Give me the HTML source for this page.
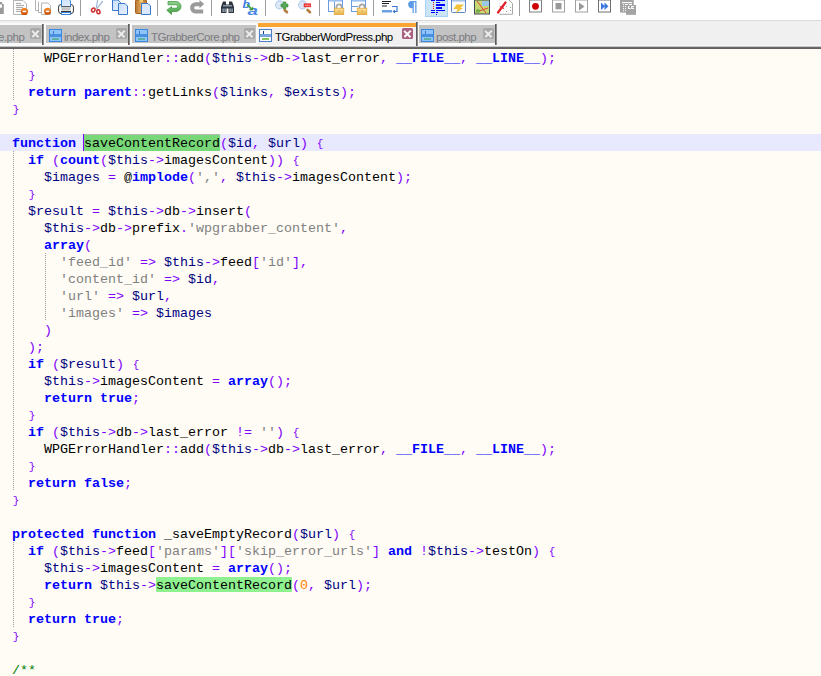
<!DOCTYPE html>
<html><head><meta charset="utf-8">
<style>
*{margin:0;padding:0;box-sizing:border-box}
html,body{width:821px;height:676px;overflow:hidden;background:#FEFCF5}
body{position:relative;font-family:"Liberation Sans",sans-serif}
#tb{position:absolute;left:0;top:0;width:821px;height:20px;background:#fff}
#tbl{position:absolute;left:0;top:20px;width:821px;height:1px;background:#dadada}
#tabbar{position:absolute;left:0;top:21px;width:821px;height:24px;background:#f0f0f0}
#tabw{position:absolute;left:0;top:45px;width:821px;height:1px;background:#fafafa}
#tabd1{position:absolute;left:0;top:46px;width:821px;height:1px;background:#c4c4c4}
#tabd2{position:absolute;left:0;top:47px;width:821px;height:2px;background:linear-gradient(#6e6e6e,#5a5a5a)}
.tabo{position:absolute;top:23px;height:22px;background:#fafafa}
.fl{position:absolute;top:29px;width:13px;height:13px;border:1px solid #3a88e0;background:#8ec4fa}
.fl i{position:absolute;left:3px;top:1px;width:1px;height:3px;background:#3a78d0}
.fl b{position:absolute;left:0;top:4px;width:11px;height:2.5px;background:#4a90e0}
.fl u{position:absolute;left:2px;top:8px;width:7px;height:1.5px;background:#5eb0a0}
.fa{background:#fdfdfd;border-color:#4a7ec8}
.fa b{background:#7aa6dc}
.fa u{background:#88c860}
.fa i{background:#1a3a90}
.x{position:absolute;top:28px;width:11px;height:11px;background:#a9a9a9;border-radius:1.5px}
.x:before,.x:after{content:"";position:absolute;left:1.2px;top:4.7px;width:8.6px;height:1.6px;background:#ececec;transform:rotate(45deg)}
.x:after{transform:rotate(-45deg)}
.xa{background:#a8617f}
.xa:before,.xa:after{background:#fff}
.tab{position:absolute;top:25px;height:18px;background:#c3c3c3}
.tabsep{position:absolute;top:24px;width:2px;height:21px;background:linear-gradient(90deg,#5c5c5c 50%,#8c8c8c 50%)}
.tt{position:absolute;top:30px;font-size:11.5px;line-height:14px;color:#7a7a80;white-space:nowrap;letter-spacing:-0.5px}
#ed{position:absolute;left:0;top:49px;width:821px;height:627px;background:#FEFCF5}
#cur{position:absolute;left:0;top:134px;width:821px;height:17px;background:#E8E8FF}
.l{position:absolute;left:12px;height:17px;line-height:17px;white-space:pre;font-family:"Liberation Mono",monospace;font-size:13.333px;color:#000}
.l b,.l i{font-style:normal;font-weight:normal}
.k{color:#0000FF;font-weight:bold!important}
.v{color:#000080}
.o{color:#8000FF}
.br{display:inline-block;width:8px;text-align:center;font-size:11px;vertical-align:0;line-height:17px}
.s{color:#808080}
.n{color:#FF8000}
.c{color:#008000}
.g{position:absolute;width:1px;background-image:linear-gradient(#a0a0a0 50%,transparent 50%);background-size:1px 2px}
.hl{position:absolute;height:17px;background:#8ff08f;border-radius:1px}
</style></head><body>
<div id="tb"></div><div id="tbl"></div>
<div id="tabbar"></div><div id="tabw"></div><div id="tabd1"></div><div id="tabd2"></div>
<!-- tab1 partial -->
<div class="tabo" style="left:0;width:44px"></div><div class="tab" style="left:0;width:42px"></div>
<div class="tt" style="left:-2px">e.php</div>
<div class="x" style="left:30px"></div>
<div class="tabsep" style="left:42px"></div>
<!-- tab2 -->
<div class="tabo" style="left:44px;width:86px"></div><div class="tab" style="left:46px;width:82px"></div>
<div class="fl" style="left:49px"><i></i><b></b><u></u></div>
<div class="tt" style="left:64px">index.php</div>
<div class="x" style="left:116px"></div>
<div class="tabsep" style="left:128px"></div>
<!-- tab3 -->
<div class="tabo" style="left:130px;width:128px"></div><div class="tab" style="left:132px;width:124px"></div>
<div class="fl" style="left:135px"><i></i><b></b><u></u></div>
<div class="tt" style="left:151px">TGrabberCore.php</div>
<div class="x" style="left:244px"></div>
<!-- active tab4 -->
<div style="position:absolute;left:258px;top:23px;width:158px;height:4px;background:#faa432"></div>
<div style="position:absolute;left:258px;top:27px;width:158px;height:1px;background:#fafafa"></div>
<div class="fl fa" style="left:259px"><i></i><b></b><u></u></div>
<div class="tt" style="left:275px;color:#000">TGrabberWordPress.php</div>
<div class="x xa" style="left:402px"></div>
<div class="tabsep" style="left:416px;top:22px;height:24px"></div>
<!-- tab5 -->
<div class="tabo" style="left:418px;width:78px"></div><div class="tab" style="left:419px;width:77px"></div>
<div class="fl" style="left:421px"><i></i><b></b><u></u></div>
<div class="tt" style="left:436px">post.php</div>
<div class="x" style="left:483px"></div>
<div class="tabsep" style="left:495px"></div>

<svg width="821" height="20" viewBox="0 0 821 20" style="position:absolute;left:0;top:0">
<defs>
<linearGradient id="og" x1="0" y1="0" x2="0" y2="1"><stop offset="0" stop-color="#f7902e"/><stop offset="1" stop-color="#c94a00"/></linearGradient>
<linearGradient id="pg" x1="0" y1="0" x2="0" y2="1"><stop offset="0" stop-color="#f4f4f4"/><stop offset="0.5" stop-color="#c8c8c8"/><stop offset="1" stop-color="#9c9c9c"/></linearGradient>
<linearGradient id="bp" x1="0" y1="0" x2="1" y2="1"><stop offset="0" stop-color="#c9defa"/><stop offset="1" stop-color="#e9f1fd"/></linearGradient>
<linearGradient id="gr" x1="0" y1="0" x2="0" y2="1"><stop offset="0" stop-color="#8fd38f"/><stop offset="1" stop-color="#3f9f3f"/></linearGradient>
<linearGradient id="gold" x1="0" y1="0" x2="0" y2="1"><stop offset="0" stop-color="#fbe6a0"/><stop offset="1" stop-color="#e6b044"/></linearGradient>
<linearGradient id="brn" x1="0" y1="0" x2="1" y2="0"><stop offset="0" stop-color="#b87830"/><stop offset="0.5" stop-color="#e0a860"/><stop offset="1" stop-color="#b87830"/></linearGradient>
</defs>
<!-- partial save all -->
<path d="M0 2H2.2V4H3.8V14H0Z" fill="#9a9a9a"/><rect x="0" y="4.5" width="2" height="3.2" fill="#fff"/>
<!-- close -->
<path d="M13.5 0.5H23L26.5 4V14.5H13.5Z" fill="#fff" stroke="#b4b4b4"/>
<g stroke="#9a9a9a" stroke-width="0.9"><path d="M16 3.4H21M16 5.4H24M16 7.4H23M16 9.4H21M16 11.4H21"/></g>
<circle cx="24.4" cy="11.4" r="3.6" fill="url(#og)"/><rect x="22.6" y="10.7" width="3.6" height="1.5" fill="#fff"/>
<!-- close all -->
<path d="M35.5 0V10.5H38.5M38.5 1.5V12.5H41.5" fill="none" stroke="#b4b4b4"/>
<path d="M41.5 3H48L50.5 5.5V14.5H41.5Z" fill="#fff" stroke="#b4b4b4"/>
<circle cx="47.5" cy="11.3" r="3.5" fill="url(#og)"/><rect x="45.8" y="10.6" width="3.5" height="1.5" fill="#fff"/>
<!-- print -->
<rect x="58.5" y="4.5" width="15" height="9" rx="2.5" fill="#ededed" stroke="#4a4a4a"/>
<rect x="60" y="6" width="1.2" height="6" fill="#fff"/><rect x="70.8" y="6" width="1.2" height="6" fill="#fff"/>
<path d="M61.5 -1H68.5L70.5 1V6.5H61.5Z" fill="url(#bp)" stroke="#3a88e0"/>
<rect x="61" y="6.2" width="10" height="1" fill="#555"/>
<rect x="61.5" y="8" width="9" height="2.5" fill="#c6c6c6"/>
<rect x="61" y="11" width="10" height="1" fill="#333"/>
<rect x="61.5" y="12.5" width="9" height="2" fill="#eef4f8" stroke="#3a88e0"/>
<!-- seps -->
<g fill="#9c9c9c"><rect x="80" y="0" width="1" height="16"/><rect x="157" y="0" width="1" height="16"/><rect x="211" y="0" width="1" height="16"/><rect x="265" y="0" width="1" height="16"/><rect x="319" y="0" width="1" height="16"/><rect x="373" y="0" width="1" height="16"/><rect x="519" y="0" width="1" height="16"/></g>
<!-- cut -->
<path d="M97.6 0L96.2 8.6M102.8 1L96.8 8.8" stroke="#a4bcd8" stroke-width="1.3" fill="none"/>
<ellipse cx="93.3" cy="10" rx="1.6" ry="2" transform="rotate(30 93.3 10)" fill="none" stroke="#d22c2c" stroke-width="1.5"/>
<ellipse cx="98.4" cy="11.8" rx="1.6" ry="2" transform="rotate(-10 98.4 11.8)" fill="none" stroke="#d22c2c" stroke-width="1.5"/>
<!-- copy -->
<path d="M112.5 0H118L120.5 2.5V10.5H112.5Z" fill="url(#bp)" stroke="#3a78d0"/>
<path d="M118.5 3.5H125L127.5 6V14.5H118.5Z" fill="url(#bp)" stroke="#3a78d0"/>
<!-- paste -->
<rect x="135.5" y="0" width="11" height="13.5" rx="1" fill="url(#brn)" stroke="#a06020"/>
<rect x="139.5" y="0" width="3.5" height="2" fill="#f0d070"/>
<path d="M141.5 3.5H148L150.5 6V14.5H141.5Z" fill="#dbe8fb" stroke="#3a78d0"/>
<!-- undo -->
<path d="M168 1.5H176A5 5 0 0 1 176 11.5H171.5V14.5L166.8 10.2L171.5 6.6V8.2H176A1.7 1.7 0 0 0 176 4.8H168Z" fill="url(#gr)" stroke="#3a8f3a" stroke-width="0.7"/>
<!-- redo -->
<path d="M203.2 13.6H195.8A5.7 5.7 0 0 1 195.8 2.2H199.5V0L204.2 4.1L199.5 8.2V6.2H195.8A1.65 1.65 0 0 0 195.8 9.5H203.2Z" fill="#9a9a9a"/>
<!-- find -->
<path d="M222 4L223 1.5H226V4.5H229V1.5H232L233 4L234 7V13H228.5V8.5H226.5V13H221V7Z" fill="#2e3640"/>
<rect x="222.5" y="8.5" width="1.2" height="3.5" fill="#a8b8c8"/><rect x="224.5" y="8.5" width="1.2" height="3.5" fill="#a8b8c8"/>
<rect x="229.5" y="8.5" width="1.2" height="3.5" fill="#a8b8c8"/><rect x="231.5" y="8.5" width="1.2" height="3.5" fill="#a8b8c8"/>
<rect x="223" y="5" width="9" height="1.5" fill="#8898a8"/>
<!-- replace -->
<text transform="translate(242.5 7.5) scale(1.15 1)" font-family="Liberation Sans" font-style="italic" font-weight="bold" font-size="10.5" fill="#3a7ae0">b</text>
<text transform="translate(247.5 15) scale(1.45 1)" font-family="Liberation Sans" font-style="italic" font-weight="bold" font-size="13" fill="#4a88e8">a</text>
<path d="M247 4.5L251.2 8.6" stroke="#3c9c3c" stroke-width="1.6"/><path d="M249.3 10.3H253.2V6.4Z" fill="#3c9c3c"/>
<!-- zoom in -->
<path d="M284.6 10L287 12.2" stroke="#b47c3c" stroke-width="2.6" stroke-linecap="round"/>
<circle cx="279.6" cy="4.9" r="4" fill="#dce8f8" stroke="#b4cdf0" stroke-width="1.1"/>
<path d="M281 4.1H283.2V1.9H285.9V4.1H288V6.9H285.9V8.8H283.2V6.9H281Z" fill="#58a858" stroke="#2f8a2f" stroke-width="0.6"/>
<!-- zoom out -->
<path d="M307.6 10L310 12.2" stroke="#b47c3c" stroke-width="2.6" stroke-linecap="round"/>
<circle cx="302.6" cy="4.9" r="4" fill="#dce8f8" stroke="#b4cdf0" stroke-width="1.1"/>
<rect x="304" y="3.8" width="6.8" height="3.1" fill="#f03c3c" stroke="#e01010" stroke-width="0.5"/>
<rect x="305" y="4.9" width="4.8" height="0.9" fill="#ff9a9a"/>
<!-- sync v -->
<rect x="328.5" y="-1" width="14" height="12.5" fill="#fff" stroke="#6c9ce0"/>
<rect x="329" y="0" width="13" height="1.6" fill="#9cc0f0"/>
<path d="M334.5 1.5V11" stroke="#6c9ce0"/>
<path d="M336.4 8.5V7A2.6 2.6 0 0 1 341.6 7V8.5" fill="none" stroke="#a4a4a4" stroke-width="1.7"/>
<rect x="334.2" y="8.2" width="9.6" height="6.4" fill="url(#gold)" stroke="#e0a030" stroke-width="0.7"/>
<rect x="338.5" y="10.5" width="1" height="1" fill="#b88a30"/>
<!-- sync h -->
<rect x="351.5" y="-1" width="14" height="12.5" fill="#fff" stroke="#6c9ce0"/>
<rect x="352" y="0" width="13" height="1.6" fill="#9cc0f0"/>
<path d="M352 6.5H358" stroke="#6c9ce0"/>
<path d="M359.4 8.5V7A2.6 2.6 0 0 1 364.6 7V8.5" fill="none" stroke="#a4a4a4" stroke-width="1.7"/>
<rect x="357.2" y="8.2" width="9.6" height="6.4" fill="url(#gold)" stroke="#e0a030" stroke-width="0.7"/>
<rect x="361.5" y="10.5" width="1" height="1" fill="#b88a30"/>
<!-- wrap -->
<g fill="#202020"><rect x="382" y="1" width="9" height="1"/><rect x="382" y="3" width="7" height="1"/><rect x="382" y="5.5" width="5" height="1"/></g>
<rect x="382" y="10" width="10" height="2.5" fill="#6aa0e0"/>
<path d="M392 6.5H397V11.5H394" fill="none" stroke="#3a78d0" stroke-width="1.2"/><path d="M395 9.5L392.5 11.5L395 13.5Z" fill="#3a78d0"/>
<!-- pilcrow -->
<path d="M411 1H416.5V13H415.2V2.3H413.8V13H412.5V8A3.5 3.5 0 0 1 411 1Z" fill="#5a9ae6"/>
<!-- pressed indent guide -->
<rect x="425.5" y="-1" width="22" height="17.5" fill="#cce4f7" stroke="#a6d2f8"/>
<g fill="#0000ff"><rect x="431" y="0" width="4" height="1"/><rect x="436" y="0" width="9" height="1"/><rect x="436" y="2" width="4" height="1"/><rect x="436" y="4" width="9" height="2"/><rect x="436" y="7" width="6" height="2"/><rect x="431" y="10" width="4" height="1"/><rect x="436" y="10" width="9" height="1"/><rect x="431" y="12" width="4" height="1"/><rect x="436" y="12" width="2" height="1"/><rect x="436" y="14" width="1" height="1"/></g>
<g fill="#ff1010"><rect x="433" y="2" width="1" height="1"/><rect x="433" y="4" width="1" height="1"/><rect x="433" y="6" width="1" height="1"/><rect x="433" y="8" width="1" height="1"/></g>
<!-- udl -->
<rect x="451.5" y="-1" width="14" height="13.5" rx="1" fill="#f8fafd" stroke="#5a88c8"/>
<rect x="452" y="0" width="13" height="1.6" fill="#a8c4e4"/>
<path d="M456.5 4.5H464L460.5 8H463L455.5 13.5L457.5 9H453.5Z" fill="#f2c23a"/>
<!-- doc map -->
<rect x="474.5" y="0" width="15" height="14" fill="#c8d870" stroke="#404858"/>
<rect x="482" y="1" width="7" height="5" fill="#9cc8e8"/>
<path d="M477 1L486 13M476 12L488 8" stroke="#e04040" stroke-width="1"/>
<circle cx="478" cy="11" r="2" fill="#70b050"/>
<!-- function list -->
<path d="M499.5 -1V14.3H512.5V3.5L509 0" fill="#fefefe" stroke="#a8a8a8"/>
<path d="M499.5 -1V14.3" stroke="#f4f4f4"/>
<g fill="#8aa88a"><rect x="506" y="6" width="1" height="1"/><rect x="510" y="7" width="1" height="1"/><rect x="506" y="11" width="1" height="1"/><rect x="510" y="10" width="1" height="1"/></g>
<path d="M498 12.5L505.5 2.5" stroke="#e0202c" stroke-width="2.2" stroke-linecap="round"/>
<path d="M500 6.5L504 8.5" stroke="#e0202c" stroke-width="1.2"/>
<!-- macro -->
<rect x="529.5" y="0" width="12" height="12" fill="#fff" stroke="#808080"/><circle cx="535.5" cy="6.3" r="3.4" fill="#d00000"/>
<rect x="552.5" y="0" width="12" height="12" fill="#fff" stroke="#a0a0a0"/><rect x="555.5" y="3" width="6" height="6.3" fill="#999"/>
<rect x="575.5" y="0" width="12" height="12" fill="#fff" stroke="#a0a0a0"/><path d="M579 2.5L584.5 6.5L579 10.5Z" fill="#999"/>
<rect x="598.5" y="0" width="12" height="12" fill="#fff" stroke="#707070"/><path d="M601 2.5L605 6.3L601 10ZM604.5 2.5L608.5 6.3L604.5 10Z" fill="#3a78e0"/>
<!-- save macro -->
<rect x="620" y="0" width="13.7" height="12.6" fill="#a4a4a4"/><rect x="626" y="5" width="10" height="9.8" fill="#a4a4a4"/>
<g fill="#fff"><rect x="622" y="2" width="10" height="1.1"/><rect x="623" y="4" width="1" height="1"/><rect x="625" y="4" width="3" height="1"/><rect x="629" y="4" width="3" height="1"/>
<rect x="623" y="6" width="1" height="1"/><rect x="625" y="6" width="1" height="1"/><rect x="623" y="8" width="1" height="1"/><rect x="625" y="8" width="1" height="1"/><rect x="623" y="10" width="1" height="1"/><rect x="625" y="10" width="1" height="1"/>
<path d="M628 6H629.2V7.9H630.6V9H628ZM631.2 6H634V7H632.4V7.9H634V9H631.2Z"/></g>
</svg>

<div id="ed"></div>
<div id="cur"></div>
<div class="g" style="left:13px;top:49px;height:51px"></div>
<div class="g" style="left:13px;top:151px;height:340px"></div>
<div class="g" style="left:13px;top:542px;height:85px"></div>
<div class="g" style="left:45px;top:253px;height:68px"></div>
<div class="hl" style="left:84px;top:134px;width:136px;background:#78d878;border-top:1px solid #b2bcb2"></div>
<div class="hl" style="left:156px;top:577px;height:15px;width:136px"></div>
<div style="position:absolute;left:83px;top:134px;width:1px;height:17px;background:#8000FF"></div>
<div class="l" style="top:50px">    WPGErrorHandler<i class="o">::</i>add<i class="o">(</i><b class="v">$this</b><i class="o">-&gt;</i>db<i class="o">-&gt;</i>last_error<i class="o">,</i> <b class="k">__FILE__</b><i class="o">,</i> <b class="k">__LINE__</b><i class="o">);</i></div>
<div class="l" style="top:67px">  <i class="o"><span class="br">}</span></i></div>
<div class="l" style="top:84px">  <b class="k">return</b> <b class="k">parent</b><i class="o">::</i>getLinks<i class="o">(</i><b class="v">$links</b><i class="o">,</i> <b class="v">$exists</b><i class="o">);</i></div>
<div class="l" style="top:101px"><i class="o"><span class="br">}</span></i></div>
<div class="l" style="top:118px"></div>
<div class="l" style="top:135px"><b class="k">function</b> saveContentRecord<i class="o">(</i><b class="v">$id</b><i class="o">,</i> <b class="v">$url</b><i class="o">)</i> <i class="o"><span class="br">{</span></i></div>
<div class="l" style="top:152px">  <b class="k">if</b> <i class="o">(</i><b class="k">count</b><i class="o">(</i><b class="v">$this</b><i class="o">-&gt;</i>imagesContent<i class="o">))</i> <i class="o"><span class="br">{</span></i></div>
<div class="l" style="top:169px">    <b class="v">$images</b> <i class="o">=</i> @<b class="k">implode</b><i class="o">(</i><i class="s">','</i><i class="o">,</i> <b class="v">$this</b><i class="o">-&gt;</i>imagesContent<i class="o">);</i></div>
<div class="l" style="top:186px">  <i class="o"><span class="br">}</span></i></div>
<div class="l" style="top:203px">  <b class="v">$result</b> <i class="o">=</i> <b class="v">$this</b><i class="o">-&gt;</i>db<i class="o">-&gt;</i>insert<i class="o">(</i></div>
<div class="l" style="top:220px">    <b class="v">$this</b><i class="o">-&gt;</i>db<i class="o">-&gt;</i>prefix<i class="o">.</i><i class="s">'wpgrabber_content'</i><i class="o">,</i></div>
<div class="l" style="top:237px">    <b class="k">array</b><i class="o">(</i></div>
<div class="l" style="top:254px">      <i class="s">'feed_id'</i> <i class="o">=&gt;</i> <b class="v">$this</b><i class="o">-&gt;</i>feed<i class="o">[</i><i class="s">'id'</i><i class="o">],</i></div>
<div class="l" style="top:271px">      <i class="s">'content_id'</i> <i class="o">=&gt;</i> <b class="v">$id</b><i class="o">,</i></div>
<div class="l" style="top:288px">      <i class="s">'url'</i> <i class="o">=&gt;</i> <b class="v">$url</b><i class="o">,</i></div>
<div class="l" style="top:305px">      <i class="s">'images'</i> <i class="o">=&gt;</i> <b class="v">$images</b></div>
<div class="l" style="top:322px">    <i class="o">)</i></div>
<div class="l" style="top:339px">  <i class="o">);</i></div>
<div class="l" style="top:356px">  <b class="k">if</b> <i class="o">(</i><b class="v">$result</b><i class="o">)</i> <i class="o"><span class="br">{</span></i></div>
<div class="l" style="top:373px">    <b class="v">$this</b><i class="o">-&gt;</i>imagesContent <i class="o">=</i> <b class="k">array</b><i class="o">();</i></div>
<div class="l" style="top:390px">    <b class="k">return</b> <b class="k">true</b><i class="o">;</i></div>
<div class="l" style="top:407px">  <i class="o"><span class="br">}</span></i></div>
<div class="l" style="top:424px">  <b class="k">if</b> <i class="o">(</i><b class="v">$this</b><i class="o">-&gt;</i>db<i class="o">-&gt;</i>last_error <i class="o">!=</i> <i class="s">''</i><i class="o">)</i> <i class="o"><span class="br">{</span></i></div>
<div class="l" style="top:441px">    WPGErrorHandler<i class="o">::</i>add<i class="o">(</i><b class="v">$this</b><i class="o">-&gt;</i>db<i class="o">-&gt;</i>last_error<i class="o">,</i> <b class="k">__FILE__</b><i class="o">,</i> <b class="k">__LINE__</b><i class="o">);</i></div>
<div class="l" style="top:458px">  <i class="o"><span class="br">}</span></i></div>
<div class="l" style="top:475px">  <b class="k">return</b> <b class="k">false</b><i class="o">;</i></div>
<div class="l" style="top:492px"><i class="o"><span class="br">}</span></i></div>
<div class="l" style="top:509px"></div>
<div class="l" style="top:526px"><b class="k">protected</b> <b class="k">function</b> _saveEmptyRecord<i class="o">(</i><b class="v">$url</b><i class="o">)</i> <i class="o"><span class="br">{</span></i></div>
<div class="l" style="top:543px">  <b class="k">if</b> <i class="o">(</i><b class="v">$this</b><i class="o">-&gt;</i>feed<i class="o">[</i><i class="s">'params'</i><i class="o">][</i><i class="s">'skip_error_urls'</i><i class="o">]</i> <b class="k">and</b> <i class="o">!</i><b class="v">$this</b><i class="o">-&gt;</i>testOn<i class="o">)</i> <i class="o"><span class="br">{</span></i></div>
<div class="l" style="top:560px">    <b class="v">$this</b><i class="o">-&gt;</i>imagesContent <i class="o">=</i> <b class="k">array</b><i class="o">();</i></div>
<div class="l" style="top:577px">    <b class="k">return</b> <b class="v">$this</b><i class="o">-&gt;</i>saveContentRecord<i class="o">(</i><i class="n">0</i><i class="o">,</i> <b class="v">$url</b><i class="o">);</i></div>
<div class="l" style="top:594px">  <i class="o"><span class="br">}</span></i></div>
<div class="l" style="top:611px">  <b class="k">return</b> <b class="k">true</b><i class="o">;</i></div>
<div class="l" style="top:628px"><i class="o"><span class="br">}</span></i></div>
<div class="l" style="top:645px"></div>
<div class="l" style="top:662px"><i class="c">/**</i></div>
</body></html>
